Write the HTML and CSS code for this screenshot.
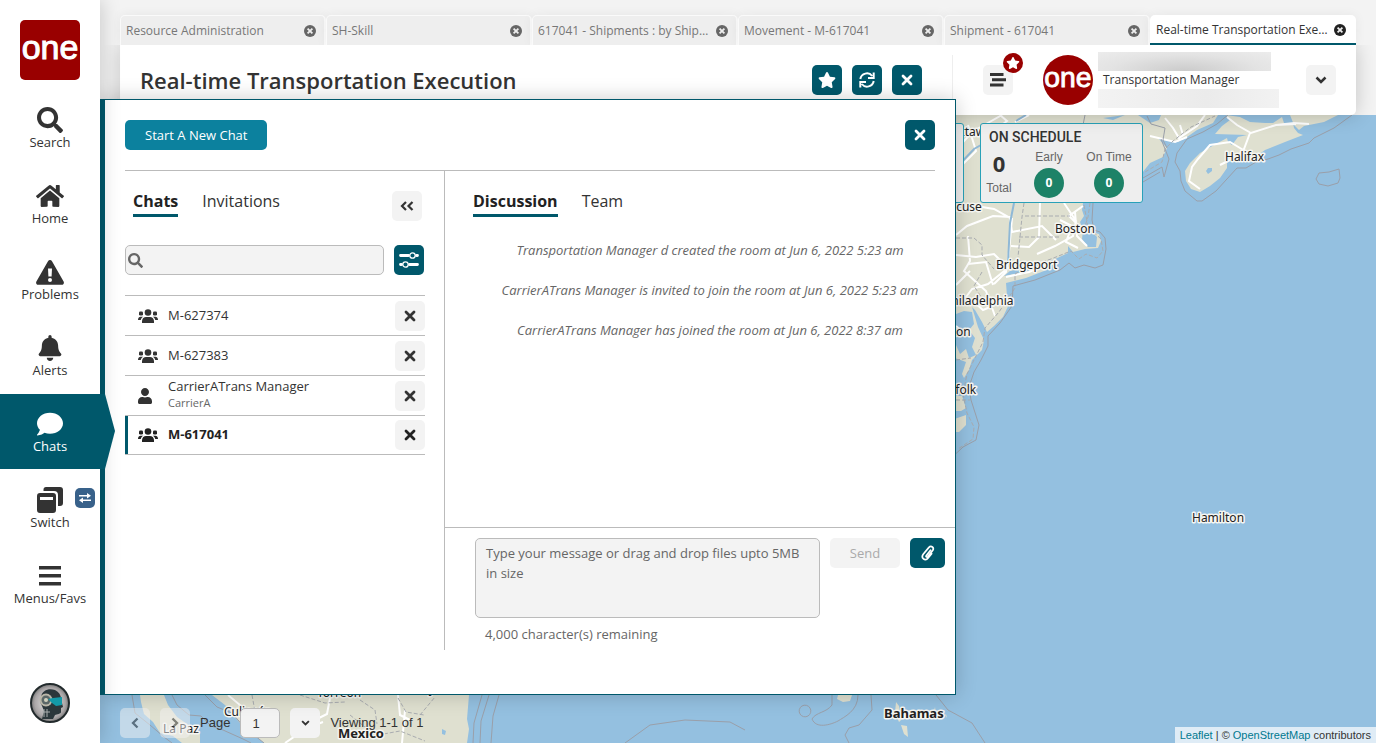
FILE: index.html
```html
<!DOCTYPE html>
<html lang="en">
<head>
<meta charset="utf-8">
<title>Real-time Transportation Execution</title>
<link rel="stylesheet" href="styles.css">
</head>
<body>
<svg class="sprite" aria-hidden="true">
  <symbol id="search" viewBox="0 0 512 512"><path d="M505 442.7L405.3 343c-4.500-4.500-10.600-7-17-7H372c27.600-35.300 44-79.700 44-128C416 93.100 322.900 0 208 0S0 93.100 0 208s93.100 208 208 208c48.300 0 92.700-16.400 128-44v16.300c0 6.400 2.500 12.500 7 17l99.700 99.700c9.400 9.400 24.600 9.400 33.900 0l28.300-28.300c9.400-9.400 9.400-24.600.1-34zM208 336c-70.700 0-128-57.200-128-128 0-70.700 57.200-128 128-128 70.700 0 128 57.200 128 128 0 70.700-57.200 128-128 128z"/></symbol>
  <symbol id="home" viewBox="0 0 576 512"><path d="M280.37 148.26L96 300.11V464a16 16 0 0 0 16 16l112.060-.29a16 16 0 0 0 15.920-16V368a16 16 0 0 1 16-16h64a16 16 0 0 1 16 16v95.640a16 16 0 0 0 16 16.050L464 480a16 16 0 0 0 16-16V300L295.670 148.260a12.190 12.190 0 0 0-15.300 0zM571.600 251.470L488 182.560V44.050a12 12 0 0 0-12-12h-56a12 12 0 0 0-12 12v72.610L318.470 43a48 48 0 0 0-61 0L4.340 251.470a12 12 0 0 0-1.600 16.900l25.500 31A12 12 0 0 0 45.150 301l235.220-193.740a12.190 12.190 0 0 1 15.300 0L530.900 301a12 12 0 0 0 16.900-1.600l25.500-31a12 12 0 0 0-1.700-16.930z"/></symbol>
  <symbol id="warn" viewBox="0 0 28 26"><path fill-rule="evenodd" d="M14 1c.9 0 1.500.4 2 1.200l11.600 20.300c.8 1.500 0 3.300-1.900 3.300H2.300C.4 25.800-.4 24 .4 22.500L12 2.200C12.500 1.400 13.100 1 14 1zM12 9.500l.4 8h3.200l.4-8zM14 19a2 2 0 1 0 0 4a2 2 0 0 0 0-4z"/></symbol>
  <symbol id="bell" viewBox="0 0 448 512"><path d="M224 512c35.320 0 63.970-28.650 63.970-64H160.030c0 35.350 28.650 64 63.970 64zm215.390-149.710c-19.320-20.760-55.470-51.990-55.470-154.290 0-77.700-54.480-139.900-127.940-155.160V32c0-17.670-14.320-32-31.980-32s-31.980 14.330-31.980 32v20.840C118.560 68.100 64.080 130.300 64.080 208c0 102.300-36.150 133.530-55.470 154.290-6 6.450-8.660 14.160-8.610 21.710.11 16.400 12.980 32 32.100 32h383.800c19.120 0 32-15.600 32.100-32 .05-7.550-2.610-15.270-8.610-21.710z"/></symbol>
  <symbol id="comment" viewBox="0 0 512 512"><path d="M256 32C114.600 32 0 125.100 0 240c0 49.600 21.400 95 57 130.700C44.500 421.100 2.700 466 2.200 466.500c-2.200 2.300-2.800 5.700-1.500 8.700S4.800 480 8 480c66.300 0 116-31.800 140.600-51.400 32.700 12.300 69 19.400 107.400 19.400 141.400 0 256-93.100 256-208S397.400 32 256 32z"/></symbol>
  <symbol id="switch" viewBox="0 0 26 26"><path d="M9 0h14a3 3 0 0 1 3 3v13a3 3 0 0 1-3 3h-2V8a4 4 0 0 0-4-4H6.500V2.500A2.500 2.500 0 0 1 9 0z"/><path fill-rule="evenodd" d="M3 6h13a3 3 0 0 1 3 3v14a3 3 0 0 1-3 3H3a3 3 0 0 1-3-3V9a3 3 0 0 1 3-3zM3 10v3h13v-3z"/></symbol>
  <symbol id="swap" viewBox="0 0 12 10"><path d="M0 2h8V0l4 2.800L8 5.500V3.500H0zM12 6.500H4v-2L0 7.200 4 10V8h8z"/></symbol>
  <symbol id="bars" viewBox="0 0 22 20"><path d="M0 0h22v3.500H0zM0 8h22v3.500H0zM0 16h22v3.500H0z"/></symbol>
  <symbol id="menu" viewBox="0 0 16 14"><path d="M0 0h13.500v3H0zM2 5.200h14v3H2zM0 10.500h13.500v3H0z"/></symbol>
  <symbol id="star" viewBox="0 0 576 512"><path d="M259.300 17.800L194 150.200 47.900 171.500c-26.200 3.800-36.700 36.100-17.700 54.600l105.700 103-25 145.500c-4.500 26.300 23.200 46 46.400 33.700L288 439.600l130.700 68.700c23.200 12.200 50.900-7.400 46.400-33.700l-25-145.500 105.700-103c19-18.500 8.500-50.800-17.700-54.600L382 150.200 316.700 17.800c-11.700-23.600-45.600-23.900-57.400 0z"/></symbol>
  <symbol id="refresh" viewBox="0 0 16 16"><path fill="none" stroke="currentColor" stroke-width="2" d="M1.300 7A6.700 6.700 0 0 1 13.200 4M14.700 9A6.700 6.700 0 0 1 2.800 12M14.700.5v5.600H9M1.300 15.500V9.900H7"/></symbol>
  <symbol id="close" viewBox="0 0 12 12"><path fill="none" stroke="currentColor" stroke-width="2.800" stroke-linecap="round" d="M2 2l8 8M10 2l-8 8"/></symbol>
  <symbol id="dot-close" viewBox="0 0 12 12"><circle cx="6" cy="6" r="6"/><path stroke="#eee" stroke-width="1.800" d="M3.600 3.600l4.800 4.800M8.400 3.600l-4.800 4.800"/></symbol>
  <symbol id="down" viewBox="0 0 12 8"><path fill="none" stroke="currentColor" stroke-width="2.500" d="M1.500 1.500L6 6l4.500-4.500"/></symbol>
  <symbol id="left" viewBox="0 0 8 12"><path fill="none" stroke="currentColor" stroke-width="2.300" d="M6.500 1.500L2 6l4.500 4.500"/></symbol>
  <symbol id="right" viewBox="0 0 8 12"><path fill="none" stroke="currentColor" stroke-width="2.300" d="M1.500 1.500L6 6l-4.500 4.500"/></symbol>
  <symbol id="collapse" viewBox="0 0 14 10"><path fill="none" stroke="currentColor" stroke-width="2.200" d="M6 1L2 5l4 4M12.500 1l-4 4 4 4"/></symbol>
  <symbol id="sliders" viewBox="0 0 20 16"><path fill="none" stroke="currentColor" stroke-width="2.800" stroke-linecap="round" d="M1.500 3.500H9.500M17.500 3.500h1M1.500 12.500H2.500M10.500 12.500h8"/><g fill="none" stroke="currentColor" stroke-width="1.300"><circle cx="13.500" cy="3.500" r="2.700"/><circle cx="6.500" cy="12.500" r="2.700"/></g></symbol>
  <symbol id="users" viewBox="0 0 20 14"><circle cx="10" cy="3.500" r="3.300"/><rect x="1" y="2.500" width="4" height="4" rx="1.300"/><rect x="15" y="2.500" width="4" height="4" rx="1.300"/><path d="M4 14v-1.800C4 9.500 6 8 8 8h4c2 0 4 1.500 4 4.200V14zM0 10.700C0 8.800 1.300 7.800 2.500 7.800H5C3.800 8.600 3 9.600 2.800 11H0zM20 10.700c0-1.900-1.300-2.900-2.500-2.900H15c1.200.8 2 1.800 2.200 3.200H20z"/></symbol>
  <symbol id="user" viewBox="0 0 448 512"><path d="M224 256c70.700 0 128-57.300 128-128S294.700 0 224 0 96 57.300 96 128s57.300 128 128 128zm89.600 32h-16.700c-22.200 10.200-46.900 16-72.900 16s-50.600-5.800-72.900-16h-16.700C60.200 288 0 348.200 0 422.400V464c0 26.500 21.500 48 48 48h352c26.500 0 48-21.500 48-48v-41.600c0-74.200-60.200-134.400-134.400-134.400z"/></symbol>
  <symbol id="clip" viewBox="0 0 14 16"><path fill="none" stroke="currentColor" stroke-width="1.700" stroke-linecap="round" d="M9.500 5.200L5.400 10.400c-.9 1.300.5 2.300 1.500 1.200l4.700-6c2-2.900-1.300-5.700-3.900-3L2.200 9.300C-.4 12.900 4 16.700 6.900 13.300l3.700-4.600"/></symbol>
</svg>

<div class="app">
  <nav class="sidebar">
    <svg class="logo" viewBox="0 0 60 60"><text x="30" y="39" text-anchor="middle">one</text></svg>
    <a class="nav" href="#"><svg width="26" height="26"><use href="#search"/></svg>Search</a>
    <a class="nav" href="#"><svg width="28" height="26"><use href="#home"/></svg>Home</a>
    <a class="nav" href="#"><svg width="28" height="26"><use href="#warn"/></svg>Problems</a>
    <a class="nav" href="#"><svg width="26" height="26"><use href="#bell"/></svg>Alerts</a>
    <a class="nav active" href="#"><svg width="26" height="26"><use href="#comment"/></svg>Chats</a>
    <a class="nav" href="#"><svg width="26" height="26"><use href="#switch"/></svg>Switch<span class="swap"><svg width="12" height="10"><use href="#swap"/></svg></span></a>
    <a class="nav" href="#"><svg width="22" height="20" class="bars"><use href="#bars"/></svg>Menus/Favs</a>
    <svg class="assistant" viewBox="0 0 40 40">
      <defs><radialGradient id="steel"><stop offset="0" stop-color="#eee"/><stop offset=".8" stop-color="#aaa6a7"/><stop offset="1" stop-color="#777"/></radialGradient></defs>
      <circle cx="20" cy="20" r="19" fill="url(#steel)" stroke="#222a2c" stroke-width="2"/>
      <path fill="#2b373b" d="M11 14C12 7 19 5 25 7c4 2 6 5 6 9l2 8-2 1v4c0 2-4 2-6 3l-2 4H12l2-8-2-5c-2-3-2-6-1-9z"/>
      <circle cx="16" cy="17" r="6.500" fill="#b9b6a8"/><circle cx="16" cy="17" r="4.500" fill="#5b6767"/><circle cx="16" cy="17" r="2" fill="#d1d0bd"/>
      <path fill="#139aa8" d="M18 16l5-1 9-1v8l-6 1-4-3z"/>
      <path fill="none" stroke="#a9adad" stroke-width="1" d="M14 26v8M17 26v8M12 29h8"/>
    </svg>
  </nav>

  <div class="main">
    <div class="tabs">
      <div class="tab"><span>Resource Administration</span><button aria-label="Close tab"><svg width="12" height="12"><use href="#dot-close"/></svg></button></div>
      <div class="tab"><span>SH-Skill</span><button aria-label="Close tab"><svg width="12" height="12"><use href="#dot-close"/></svg></button></div>
      <div class="tab"><span>617041 - Shipments : by Shipment Number</span><button aria-label="Close tab"><svg width="12" height="12"><use href="#dot-close"/></svg></button></div>
      <div class="tab"><span>Movement - M-617041</span><button aria-label="Close tab"><svg width="12" height="12"><use href="#dot-close"/></svg></button></div>
      <div class="tab"><span>Shipment - 617041</span><button aria-label="Close tab"><svg width="12" height="12"><use href="#dot-close"/></svg></button></div>
      <div class="tab current"><span>Real-time Transportation Execution</span><button aria-label="Close tab"><svg width="12" height="12"><use href="#dot-close"/></svg></button></div>
    </div>
    <header class="header">
      <div class="heading">
        <h1>Real-time Transportation Execution</h1>
        <button class="btn teal" aria-label="Favorite"><svg width="18" height="16"><use href="#star"/></svg></button>
        <button class="btn teal" aria-label="Refresh"><svg width="16" height="16"><use href="#refresh"/></svg></button>
        <button class="btn teal" aria-label="Close"><svg width="12" height="12"><use href="#close"/></svg></button>
      </div>
      <div class="account">
        <button class="btn menu" aria-label="Menu"><svg width="16" height="14"><use href="#menu"/></svg><span class="badge"><svg width="14" height="12"><use href="#star"/></svg></span></button>
        <svg class="avatar" viewBox="0 0 60 60"><text x="30" y="38" text-anchor="middle">one</text></svg>
        <div class="who"><i class="smudge dark"></i><span>Transportation Manager</span><i class="smudge"></i></div>
        <button class="btn" aria-label="Account options"><svg width="12" height="8"><use href="#down"/></svg></button>
      </div>
    </header>

    <section class="map">
      <svg class="canvas">
        <g transform="translate(-100 -115)">
          <g class="land">
            <path d="M940 115H1218L1213 123 1197 130 1187 137 1178 142 1163 140 1158 138 1167 148 1163 157 1150 163 1142 173 1120 190 1083 203 1082 210 1084 216 1080 222 1083 230 1082 239 1088 247 1096 247 1097 237 1092 232 1099 234 1101 241 1098 248 1085 249 1073 252 1068 246 1068 253 1053 260 1035 266 1010 271 1004 276 1025 272 1055 263 1044 271 1026 278 1006 283 1007 296 1011 300 1003 317 994 326 987 332 982 322 975 310 972 307 978 327 984 340 982 350 972 360 969 370 964 378 962 374 966 362 955 358 940 350zM940 396h22l4 12-5 3h-21zM940 424l26-9v10l-7 7h-19z"/>
            <path d="M1226 115l14 2 10 5 15 1 8 0 9-6 2 6h9l1 5 4 5 5 2-18 7-20 8-14 10-24 0 0 8-7 10-10 8-10 6-9-3-5-8-1-10 5-8 10-10 14-8 13-7 1 4 4 3 6-8 9-2-32-1 7-8 8-6zM1290 115h48l-14 7-20 4-5 4-5-5z"/>
            <path d="M140 695h24l4 10 9 12 10 7 13 9v10h-18l-9-7-13-3-7-11-9-8-3-12zM212 695l13 10 10 12 9 11 10 7 10 8h203l2-14-2-10 2-24z"/>
            <path d="M838 695h14l-2 6-7 1-6-3zM896 702l3 4 1 6 4 5-5 5-4-9zM901 725l6 1 1 11-4-3zM935 707l1 7-2-3zM946 714l1 4-2-3z"/>
          </g>
          <g class="water"><path d="M956 314l8-3 8 1 2 12-5 6 6 8-3 9 4 8-7 3-3-9-6 5-4-9zM1208 168l4 0v3l-4 3-2-3zM1138 115l12 8 9-3 2-5zM1103 118l10 2 12-5zM442 729l4 2-1 4-3-1z"/></g>
          <g class="road">
            <path d="M956 150l16-18 30-17M956 210l20-4 18 3 16 9 2 14 30-6 14 14M968 125l8 26-20 20M956 235l11-9 26-10 18 1M1012 218l-3 34-3 20-12 12M1040 203l-1 34-10 10-18-1M1064 203l12 18-3 15-18 10-18 8M1083 230l-14-14 14-10M956 255l20 2 18-3 14 14-20 16-16 5-12 16M968 236l2 25-6 10 22 20 9 25M968 264l18-2 7 23M972 300l11 10 12-5M956 285l14-14M1006 277l23-5 18-8M956 326l9 8M1060 220l12 6-6 16 12 6M1075 212l2 24 10 10"/>
            <path d="M1165 118l8 10 6 10 18-12 8-11M1150 136l25 6 12-5M1180 125l3 10M1227 117l10 8 14 8 25-8 20-1M1250 133l-6 16-4 4M1245 151l-15-9-20 3-12 14-6 8-3 14 11 8M1220 165l10-5M1276 125l18-2 15 1M1000 115l7 6-9 7M1015 122l14-7M228 695l12 10 7 17 10 12M330 698l-3 16-22 11M398 695l2 20 12 6M405 710l-3 33M285 743l22-15 16-6"/>
          </g>
          <path class="river" d="M1014 203l-4 20-2 40M956 168l18-19 14-8M1016 121l10-6"/>
          <g class="bound dash">
            <path d="M956 238h18l8 7v10l12 14M982 272l-8 14 13 20M1024 203l-2 14-4 40M1025 216h45M1019 237h40M956 400h14M956 360l15-2M1090 203l-2 14-5 15M1084 205l4 22 13 12 2 12-6 7-11-4-7 5-8-8-20 8-24 8-12 7 0 14-16 24-14 16-2 14-8 16-8 16-4 20 4 19 7 14-1 12-15 10M1140 175l22-13 3-13 8-8 18-14 24-11M252 695l4 22 18 14M300 695l25 8 20-1M350 715l15 12 12 4M360 700l15 10 2 14M398 698l8 14 18 3M420 715l15-18M378 735l22-4 25 10"/>
          </g>
          <g class="bound">
            <path d="M1093 203l-1 17 2 10 6 2 5 6 1 11-3 16-8 3-11-3-9 3-6-5-9 7-25 10-22 6-1 20-12 17-12 13v10l-7 14-7 12-5 15 2 13 8 25-3 15-13 7-15 14M1143 178l19-11 2 10 5-18-8-20M1143 182l17-10M1085 115l-2 10M1352 115l-18 13-20 10-5 5-18 6-12 6-11 4-12 3-10 6h-9l-21 23-14 10h-5l-12-10-4-10-1-10-5-9 2-9 10-14 16-7 14-8 18-15"/>
            <path d="M1316 179l3-6 10-1 10-3 1 9-2 5-10 3-9-2zM132 695l3 18 15 12 14 12 8 6M172 695l5 10 12 10 12 1 10 10 12 4 20 9 8 4M205 695l12 12 15 6 12 14 20 16M473 743l1-20 8-28M480 743l1-22 8-26M499 695l-6 21-2 27M625 743l25-18 35-5 45 2 15 8M810 708a5 5 0 1 0-10 6 5 5 0 0 0 10-6zM812 719c4-7 14-6 20-14v-10M858 695c0 16-14 22-20 26-8 4-22 8-26-2M871 695l1 15-13 15-10 3-4 7 4 8M936 695l12 15 24 13 13 20"/>
            <path d="M1147 116l4 8 14 4-2 12 4 8"/>
          </g>
          <g class="place">
            <text x="1225" y="161">Halifax</text><text x="1055" y="233">Boston</text><text x="996" y="269">Bridgeport</text><text x="944" y="305">Philadelphia</text><text x="903" y="336">Washington</text><text x="934" y="394">Norfolk</text><text x="932" y="211">Syracuse</text><text x="951" y="136">Ottawa</text><text x="1192" y="522">Hamilton</text><text x="317" y="697">Torreón</text><text x="376" y="693">Monterrey</text><text x="224" y="716">Culiacán</text><text x="163" y="733">La Paz</text>
            <text class="country" x="884" y="718">Bahamas</text><text class="country" x="338" y="738">Mexico</text>
          </g>
        </g>
      </svg>
      <div class="stats">
        <div class="stat"></div>
        <div class="stat">
          <h2>ON SCHEDULE</h2>
          <div class="figures">
            <div class="figure total"><b>0</b><span>Total</span></div>
            <div class="figure"><span>Early</span><em>0</em></div>
            <div class="figure"><span>On Time</span><em>0</em></div>
          </div>
        </div>
      </div>
      <div class="pager">
        <button class="btn" disabled aria-label="Previous page"><svg width="8" height="12"><use href="#left"/></svg></button>
        <button class="btn" disabled aria-label="Next page"><svg width="8" height="12"><use href="#right"/></svg></button>
        <label for="page">Page</label>
        <input id="page" value="1">
        <button class="btn" aria-label="Choose page"><svg width="9" height="6" viewBox="0 0 12 8"><use href="#down"/></svg></button>
        <span>Viewing 1-1 of 1</span>
      </div>
      <div class="credit"><a href="#">Leaflet</a> | © <a href="#">OpenStreetMap</a> contributors</div>
    </section>
  </div>

  <section class="chat">
    <div class="chat-top">
      <button class="start">Start A New Chat</button>
      <button class="btn teal" aria-label="Close chat"><svg width="12" height="12"><use href="#close"/></svg></button>
    </div>
    <div class="chat-body">
      <div class="rooms">
        <div class="switcher">
          <button class="pick on">Chats</button><button class="pick">Invitations</button>
          <button class="btn fold" aria-label="Collapse"><svg width="14" height="10"><use href="#collapse"/></svg></button>
        </div>
        <div class="filter">
          <label class="find"><svg width="15" height="15"><use href="#search"/></svg><input type="text" aria-label="Search chats"></label>
          <button class="btn teal" aria-label="Filters"><svg width="20" height="16"><use href="#sliders"/></svg></button>
        </div>
        <ul class="list">
          <li><svg width="20" height="14"><use href="#users"/></svg><span>M-627374</span><button class="btn" aria-label="Remove"><svg width="12" height="12"><use href="#close"/></svg></button></li>
          <li><svg width="20" height="14"><use href="#users"/></svg><span>M-627383</span><button class="btn" aria-label="Remove"><svg width="12" height="12"><use href="#close"/></svg></button></li>
          <li><svg width="14" height="16" class="solo"><use href="#user"/></svg><span class="person">CarrierATrans Manager<small>CarrierA</small></span><button class="btn" aria-label="Remove"><svg width="12" height="12"><use href="#close"/></svg></button></li>
          <li class="selected"><svg width="20" height="14"><use href="#users"/></svg><span>M-617041</span><button class="btn" aria-label="Remove"><svg width="12" height="12"><use href="#close"/></svg></button></li>
        </ul>
      </div>
      <div class="talk">
        <div class="switcher"><button class="pick on">Discussion</button><button class="pick">Team</button></div>
        <div class="log">
          <p>Transportation Manager d created the room at Jun 6, 2022 5:23 am</p>
          <p>CarrierATrans Manager is invited to join the room at Jun 6, 2022 5:23 am</p>
          <p>CarrierATrans Manager has joined the room at Jun 6, 2022 8:37 am</p>
        </div>
        <form class="composer">
          <div class="row">
            <textarea aria-label="Message" placeholder="Type your message or drag and drop files upto 5MB in size"></textarea>
            <button class="send" type="button" disabled>Send</button>
            <button class="btn teal attach" type="button" aria-label="Attach file"><svg width="14" height="16"><use href="#clip"/></svg></button>
          </div>
          <p class="left">4,000 character(s) remaining</p>
        </form>
      </div>
    </div>
  </section>
</div>
</body>
</html>
```
FILE: styles.css
```css
* { box-sizing: border-box; }
body { margin: 0; font: 13px/20px "Open Sans", sans-serif; color: #333; background: #f3f3f3; }
h1, h2, p, ul { margin: 0; padding: 0; }
button, input, textarea { font: inherit; color: inherit; border: 0; padding: 0; }
svg { fill: currentColor; flex: none; display: block; }
a { color: #00788f; text-decoration: none; }
.sprite { position: absolute; width: 0; height: 0; }

.app { display: flex; min-height: 100vh; position: relative; overflow: hidden; }
.btn { flex: none; width: 30px; height: 30px; border-radius: 5px; background: #f3f3f3; display: flex; align-items: center; justify-content: center; }
.teal { background: #00586b; color: #fff; }

/* Left navigation */
.sidebar { width: 100px; flex: none; background: #fff; display: flex; flex-direction: column; gap: 1px; padding: 20px 0; box-shadow: 0 0 20px rgba(0, 0, 0, .2); z-index: 3; }
.logo { width: 60px; height: 60px; margin: 0 20px 9px; border-radius: 5px; background: #900; }
.logo text, .avatar text { font: 34px "Liberation Sans", Arial, sans-serif; fill: #fff; stroke: #fff; stroke-width: 1px; }
.nav { height: 75px; display: flex; flex-direction: column; align-items: center; padding-top: 17px; color: #333; position: relative; }
.nav svg { margin: 0 0 -1px; }
.nav .bars { margin: 3px 0 2px; }
.active { background: #00586b; color: #fff; width: 105px; padding-right: 5px; }
.active::after { content: ""; position: absolute; left: 105px; top: 0; border: solid transparent; border-width: 37px 0 38px 10px; border-left-color: #00586b; }
.swap { position: absolute; right: 5px; top: 18px; width: 20px; height: 20px; border-radius: 5px; background: #38618a; color: #fff; display: flex; align-items: center; justify-content: center; }
.nav .swap svg { margin: 0; }
.assistant { width: 40px; height: 40px; margin: auto 30px 0; }

/* Tabs and header */
.main { flex: 1; min-width: 0; display: flex; flex-direction: column; }
.tabs { display: grid; grid-template-columns: repeat(6, minmax(0, 1fr)); padding: 15px 20px 0; }
.tab { height: 30px; display: flex; align-items: center; justify-content: space-between; gap: 4px; padding: 0 8px 0 5px; border: solid #fafafa; border-width: 1px 2px 0 1px; border-radius: 5px 5px 0 0; background: #eee; color: #777; font-size: 12px; box-shadow: 0 0 12px rgba(0, 0, 0, .06); }
.tab span { overflow: hidden; white-space: nowrap; text-overflow: ellipsis; }
.tab button { background: none; color: #666; }
.current { background: #fff; color: #333; padding: 2px 10px 0 6px; border: solid #00586b; border-width: 0 0 2px; }
.current button { color: #222; }
.header { height: 70px; margin: 0 20px; background: #fff; display: flex; box-shadow: 0 0 20px rgba(0, 0, 0, .2); clip-path: inset(0 -20px -20px); z-index: 1; border-radius: 0 0 5px 5px; }
.heading { flex: 1; display: flex; align-items: center; gap: 10px; padding: 0 30px 0 20px; }
h1 { flex: 1; font-size: 22px; line-height: 30px; font-weight: 600; white-space: nowrap; }
.account { flex: none; width: 404px; display: flex; align-items: center; padding: 0 20px 0 31px; background: linear-gradient(#eee, #eee) 0 10px / 1px 50px no-repeat; }
.menu { position: relative; }
.badge { position: absolute; right: -10px; top: -12px; width: 20px; height: 20px; border-radius: 50%; background: #900; color: #fff; display: flex; align-items: center; justify-content: center; }
.avatar { width: 50px; height: 50px; border-radius: 50%; background: #900; margin: 0 5px 0 30px; }
.who { flex: 1; font-size: 12px; line-height: 18px; }
.who span { display: block; padding-left: 5px; }
.smudge { display: block; width: 181px; height: 19px; background: linear-gradient(90deg, #f3f3f3, #ebebeb 60%, #f2f2f2); }
.dark { width: 173px; background: radial-gradient(ellipse at 50% 100%, #cbcbcb, #e3e3e3 60%, #ececec); }

/* Map */
.map { flex: 1; position: relative; overflow: hidden; background: #94c0e0; font-family: "Liberation Sans", Arial, sans-serif; }
.canvas { position: absolute; width: 100%; height: 100%; }
.land { fill: #dfe0d0; }
.water { fill: #94c0e0; }
.road { fill: none; stroke: #fff; stroke-width: 2; }
.river { fill: none; stroke: #8fb8d6; stroke-width: 2; }
.bound { fill: none; stroke: #9a9fa9; stroke-width: 1; }
.dash { stroke-dasharray: 4 2; stroke: #a9acb0; }
.place { font: 12px "Noto Sans", sans-serif; fill: #222; stroke: #f6f6f2; stroke-width: 3px; stroke-linejoin: round; paint-order: stroke; }
.country { font-size: 13px; font-weight: 700; }
.stats { position: absolute; left: 701px; top: 8px; display: flex; gap: 16px; }
.stat { width: 163px; height: 80px; background: #eee; border: 1px solid #29a1b8; border-radius: 3px; padding: 4px 9px 0 8px; }
h2 { font: 500 14px/18px Roboto, sans-serif; }
.figures { display: flex; justify-content: space-between; margin-left: -4px; }
.figure { display: flex; flex-direction: column; align-items: center; font-size: 12px; line-height: 16px; color: #666; min-width: 48px; padding-top: 3px; }
.total { min-width: 28px; padding: 4px 0 0; }
.figure b { font: 700 22px/26px "Open Sans", sans-serif; color: #333; }
.total span { padding-top: 4px; }
.figure em { width: 30px; height: 30px; margin-top: 3px; border-radius: 50%; background: #1d8267; color: #fff; font: 700 12px/30px "Open Sans", sans-serif; text-align: center; }
.pager { position: absolute; left: 20px; bottom: 5px; display: flex; align-items: center; gap: 10px; }
.pager .btn:disabled { opacity: .5; color: #222; }
.pager input { width: 40px; height: 30px; border: 1px solid #bbb; border-radius: 5px; background: #f3f3f3; padding-left: 11px; }
.credit { position: absolute; right: 0; bottom: 0; background: rgba(255, 255, 255, .7); padding: 0 5px; font-size: 11px; line-height: 16px; }

/* Chat panel */
.chat { position: absolute; z-index: 2; left: 100px; right: 420px; top: 99px; bottom: 48px; background: #fff; border: 1px solid #00586b; border-left-width: 5px; box-shadow: 0 0 20px rgba(0, 0, 0, .2); padding: 20px 0 44px 20px; display: flex; flex-direction: column; }
.chat-top { display: flex; justify-content: space-between; margin-right: 20px; padding-bottom: 20px; border-bottom: 1px solid #bbb; }
.start { background: #0c819e; color: #fff; border-radius: 5px; padding: 0 20px; height: 30px; }
.chat-body { flex: 1; display: flex; }
.rooms { width: 320px; flex: none; border-right: 1px solid #bbb; padding: 20px 19px 0 0; }
.switcher { display: flex; align-items: flex-start; gap: 24px; padding-left: 8px; }
.pick { background: none; font-size: 16px; line-height: 20px; padding-bottom: 3px; border-bottom: 3px solid transparent; }
.on { font-weight: 700; border-color: #00586b; color: #222; }
.fold { margin: 0 3px 0 auto; }
.filter { display: flex; gap: 10px; margin: 24px 1px 20px 0; }
.find { flex: 1; display: flex; align-items: center; height: 30px; padding-left: 2px; border: 1px solid #bbb; border-radius: 5px; background: #f3f3f3; color: #666; }
.find input { flex: 1; min-width: 0; background: none; }
.list { list-style: none; }
.list li { height: 40px; display: flex; align-items: center; border-top: 1px solid #bbb; padding-left: 13px; }
.list li > span { flex: 1; padding: 0 0 2px 10px; line-height: 20px; }
.list li > .person { padding-bottom: 6px; }
.list .solo { margin-right: 6px; }
.list small { display: block; font-size: 11px; line-height: 14px; color: #666; }
.list .selected { border-bottom: 1px solid #bbb; box-shadow: inset 3px 0 #00586b; font-weight: 700; color: #222; }
.talk { flex: 1; min-width: 0; display: flex; flex-direction: column; }
.talk .switcher { padding: 20px 0 0 28px; }
.log { flex: 1; padding: 13px 0 0 20px; text-align: center; font-style: italic; line-height: 40px; color: #666; }
.composer { border-top: 1px solid #bbb; padding: 10px 10px 0 30px; height: 123px; color: #666; }
.row { display: flex; align-items: flex-start; gap: 10px; }
.row textarea { flex: 1; height: 80px; resize: none; border: 1px solid #bbb; border-radius: 5px; background: #f3f3f3; padding: 4px 10px; }
.row textarea::placeholder { color: #666; opacity: 1; }
.send { width: 70px; height: 30px; border-radius: 5px; background: #f3f3f3; color: #aaa; }
.attach { width: 35px; }
.left { padding: 6px 10px 0; }
```
